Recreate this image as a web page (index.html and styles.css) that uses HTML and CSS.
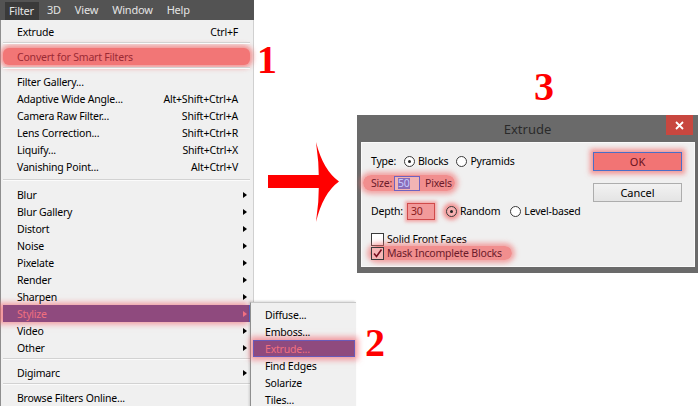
FILE: index.html
```html
<!DOCTYPE html>
<html lang="en">
<head>
    <meta charset="UTF-8">
    <title>Extrude Filter</title>
    <link rel="stylesheet" href="styles.css">
</head>
<body>
    <div class="canvas">
        <!-- Filter menu -->
        <div class="ps-menu">
            <div class="menubar">
                <span class="mb-item active">Filter</span>
                <span class="mb-item">3D</span>
                <span class="mb-item">View</span>
                <span class="mb-item">Window</span>
                <span class="mb-item">Help</span>
            </div>
            <div class="dropdown">
                <div class="item"><span>Extrude</span><span class="key">Ctrl+F</span></div>
                <div class="sep"></div>
                <div class="item glow"><span>Convert for Smart Filters</span></div>
                <div class="sep"></div>
                <div class="item"><span>Filter Gallery...</span></div>
                <div class="item"><span>Adaptive Wide Angle...</span><span class="key">Alt+Shift+Ctrl+A</span></div>
                <div class="item"><span>Camera Raw Filter...</span><span class="key">Shift+Ctrl+A</span></div>
                <div class="item"><span>Lens Correction...</span><span class="key">Shift+Ctrl+R</span></div>
                <div class="item"><span>Liquify...</span><span class="key">Shift+Ctrl+X</span></div>
                <div class="item"><span>Vanishing Point...</span><span class="key">Alt+Ctrl+V</span></div>
                <div class="sep tall"></div>
                <div class="item"><span>Blur</span><span class="arr"></span></div>
                <div class="item"><span>Blur Gallery</span><span class="arr"></span></div>
                <div class="item"><span>Distort</span><span class="arr"></span></div>
                <div class="item"><span>Noise</span><span class="arr"></span></div>
                <div class="item"><span>Pixelate</span><span class="arr"></span></div>
                <div class="item"><span>Render</span><span class="arr"></span></div>
                <div class="item"><span>Sharpen</span><span class="arr"></span></div>
                <div class="item picked"><span>Stylize</span><span class="arr"></span></div>
                <div class="item"><span>Video</span><span class="arr"></span></div>
                <div class="item"><span>Other</span><span class="arr"></span></div>
                <div class="sep"></div>
                <div class="item"><span>Digimarc</span><span class="arr"></span></div>
                <div class="sep"></div>
                <div class="item"><span>Browse Filters Online...</span></div>
            </div>
        </div>

        <!-- Stylize submenu -->
        <div class="submenu">
            <div class="item"><span>Diffuse...</span></div>
            <div class="item"><span>Emboss...</span></div>
            <div class="item picked"><span>Extrude...</span></div>
            <div class="item"><span>Find Edges</span></div>
            <div class="item"><span>Solarize</span></div>
            <div class="item"><span>Tiles...</span></div>
        </div>

        <!-- step numbers -->
        <div class="step s1">1</div>
        <div class="step s2">2</div>
        <div class="step s3">3</div>

        <svg class="arrow" viewBox="260 135 90 95" width="90" height="95">
            <rect x="268" y="175" width="52" height="13" fill="#ff0000"/>
            <path d="M316 142 Q323 170 339 181.5 Q323 193 316 222 Q322 182 316 142 Z" fill="#ff0000"/>
        </svg>

        <!-- Extrude dialog -->
        <div class="dialog">
            <div class="dlg-title">
                <span>Extrude</span>
                <span class="dlg-close">
                    <svg width="9" height="9" viewBox="0 0 9 9"><path d="M1 1 L8 8 M8 1 L1 8" stroke="#fff" stroke-width="1.8"/></svg>
                </span>
            </div>
            <div class="dlg-body">
                <div class="opts">
                    <div class="row r-type">
                        <span class="lbl type-lbl">Type:</span>
                        <span class="radio on"></span><span class="opt">Blocks</span>
                        <span class="radio"></span><span class="opt">Pyramids</span>
                    </div>
                    <div class="row r-size">
                        <span class="hl size-hl">
                            <span class="lbl size-lbl">Size:</span>
                            <span class="field sel-field"><span class="seltext">50</span></span>
                            <span>Pixels</span>
                        </span>
                    </div>
                    <div class="row r-depth">
                        <span class="lbl depth-lbl">Depth:</span>
                        <span class="field red-field">30</span>
                        <span class="radio on red-radio"></span><span class="opt">Random</span>
                        <span class="radio"></span><span class="opt">Level-based</span>
                    </div>
                    <div class="row r-check">
                        <span class="check"></span><span>Solid Front Faces</span>
                    </div>
                    <div class="row r-check">
                        <span class="hl mask-hl">
                            <span class="check on">
                                <svg width="11" height="11" viewBox="0 0 11 11"><path d="M2 5.5 L4.5 8.5 L9.5 1.5" fill="none" stroke="#7a1020" stroke-width="1.6"/></svg>
                            </span>
                            <span>Mask Incomplete Blocks</span>
                        </span>
                    </div>
                </div>
                <div class="btns">
                    <div class="btn ok">OK</div>
                    <div class="btn">Cancel</div>
                </div>
            </div>
        </div>
    </div>
</body>
</html>
```

FILE: styles.css
```css
body {
    margin: 0;
    background: #fff;
    font-family: "Noto Sans", "Open Sans", sans-serif;
    font-size: 10.5px;
    letter-spacing: -0.2px;
    color: #000;
}

.canvas {
    position: relative;
    width: 700px;
    height: 406px;
    overflow: hidden;
}

/* ---------- menu ---------- */

.ps-menu {
    position: absolute;
    left: 0;
    top: 0;
    width: 254px;
}

.menubar {
    display: flex;
    height: 20px;
    background: #535353;
    padding-left: 5px;
    gap: 2px;
}

.mb-item {
    padding: 0 6px;
    line-height: 20px;
    color: #e4e4e4;
    font-size: 11px;
}

.mb-item.active {
    background: #3a3a3a;
    margin-top: 2px;
    line-height: 18px;
    padding: 0 5px 0 4px;
}

.dropdown {
    height: 386px;
    box-sizing: border-box;
    padding-top: 3px;
    background: #f0f0f0;
    border-left: 1px solid #8e8e8e;
    border-right: 1px solid #d0d0d0;
}

.item {
    display: flex;
    justify-content: space-between;
    align-items: center;
    height: 17px;
    margin: 0 3px 0 2px;
    padding: 0 12px 0 14px;
    white-space: nowrap;
}

.arr {
    width: 0;
    height: 0;
    margin-right: -9px;
    border-left: 4px solid #000;
    border-top: 3.5px solid transparent;
    border-bottom: 3.5px solid transparent;
}

.sep {
    height: 8px;
    margin: 0 3px 0 2px;
    position: relative;
}

.sep::before {
    content: "";
    position: absolute;
    left: 0;
    right: 0;
    top: 2px;
    border-top: 1px solid #d2d2d2;
    border-bottom: 1px solid #fbfbfb;
}

.sep.tall {
    height: 11px;
}

.sep.tall::before {
    top: 4px;
}

.item.glow {
    background: #f27676;
    color: #9a2a34;
    border-radius: 6px;
    box-shadow: 0 0 5px 3px rgba(244, 110, 110, 0.7);
}

.item.picked {
    background: #8f4a7e;
    color: #f0707e;
    box-shadow: -4px 0 6px 2px rgba(244, 90, 100, 0.6), inset -1px 0 0 #5a6ad0;
}

.item.picked .arr {
    border-left-color: #f07080;
}

/* ---------- submenu ---------- */

.submenu {
    position: absolute;
    left: 250px;
    top: 302px;
    width: 106px;
    height: 110px;
    box-sizing: border-box;
    padding-top: 3px;
    background: #f0f0f0;
    border-left: 1px solid #8e8e8e;
    border-top: 1px solid #c8c8c8;
    box-shadow: -1px -1px 2px rgba(0, 0, 0, 0.15);
}

.submenu .item {
    margin: 0 1px 0 2px;
    padding-left: 12px;
}

.submenu .item.picked {
    box-shadow: 0 0 6px 3px rgba(244, 90, 100, 0.6), inset 0 0 0 1px #6a5ab8;
}

/* ---------- step numbers and arrow ---------- */

.step {
    position: absolute;
    font-family: "Liberation Serif", serif;
    font-weight: bold;
    font-size: 40px;
    line-height: 40px;
    color: #ff0000;
    letter-spacing: 0;
}

.s1 { left: 257px; top: 40px; }
.s2 { left: 365px; top: 323px; }
.s3 { left: 534px; top: 67px; }

.arrow {
    position: absolute;
    left: 260px;
    top: 135px;
}

/* ---------- dialog ---------- */

.dialog {
    position: absolute;
    left: 357px;
    top: 115px;
    width: 341px;
    height: 158px;
    background: #6a6a6a;
}

.dlg-title {
    position: relative;
    height: 27px;
    display: flex;
    align-items: center;
    justify-content: center;
    color: #2a2a2a;
    font-size: 13px;
    letter-spacing: 0;
}

.dlg-close {
    position: absolute;
    right: 5px;
    top: 0;
    width: 27px;
    height: 20px;
    background: #c8473f;
    display: flex;
    align-items: center;
    justify-content: center;
}

.dlg-body {
    display: flex;
    height: 125px;
    margin: 0 3px 0 4px;
    box-sizing: border-box;
    background: #f0f0f0;
    border: 1px solid #fafafa;
}

.opts {
    width: 231px;
    padding: 10px 0 0 9px;
    box-sizing: border-box;
}

.row {
    display: flex;
    align-items: center;
    white-space: nowrap;
}

.r-type { height: 16px; }
.r-size { height: 16px; margin-top: 6px; }
.r-depth { height: 18px; margin-top: 11px; }
.r-check { height: 14px; }
.r-depth + .r-check { margin-top: 12px; }

.type-lbl { width: 33px; }
.depth-lbl { width: 36px; }
.size-lbl { width: 23px; }

.radio {
    width: 11px;
    height: 11px;
    box-sizing: border-box;
    border: 1px solid #3a3a3a;
    border-radius: 50%;
    background: #fff;
    margin-right: 3px;
    display: flex;
    align-items: center;
    justify-content: center;
}

.radio.on::after {
    content: "";
    width: 3px;
    height: 3px;
    border-radius: 50%;
    background: #222;
}

.r-type .opt { margin-right: 8px; }
.r-depth .opt { margin-right: 10px; }

.red-radio {
    margin-left: 11px;
    background: #f7b0b0;
    box-shadow: 0 0 4px 3px rgba(244, 100, 100, 0.7);
}

.field {
    box-sizing: border-box;
    border: 1px solid #9a9a9a;
    display: flex;
    align-items: center;
    padding-left: 3px;
    background: #fff;
}

.sel-field {
    width: 26px;
    height: 15px;
    margin-right: 5px;
    border-color: #6e62c0;
    background: #f2b4b4;
}

.seltext {
    background: #8a6cb8;
    color: #c6cbff;
    line-height: 11px;
}

.red-field {
    width: 28px;
    height: 17px;
    border-color: #d04a4a;
    background: #f29a9a;
    color: #8a1a20;
    box-shadow: 0 0 3px 2px rgba(244, 100, 100, 0.5);
}

.hl {
    display: flex;
    align-items: center;
    border-radius: 8px;
    color: #6a1a2a;
    background: rgba(242, 110, 110, 0.75);
    box-shadow: 0 0 5px 3px rgba(242, 110, 110, 0.6);
}

.size-hl {
    margin-left: -8px;
    padding: 0 3px 0 8px;
    height: 16px;
}

.mask-hl {
    margin-left: -1px;
    padding: 0 10px 0 1px;
    height: 14px;
}

.check {
    width: 13px;
    height: 13px;
    box-sizing: border-box;
    border: 1px solid #3a3a3a;
    background: #fff;
    margin-right: 3px;
    display: flex;
    align-items: center;
    justify-content: center;
}

.check.on {
    background: #f6b6b6;
}

.btns {
    display: flex;
    flex-direction: column;
    gap: 12px;
    padding-top: 9px;
}

.btn {
    width: 89px;
    height: 19px;
    box-sizing: border-box;
    border: 1px solid #adadad;
    background: linear-gradient(#f2f2f2, #e4e4e4);
    display: flex;
    align-items: center;
    justify-content: center;
    font-size: 11px;
    letter-spacing: 0;
}

.btn.ok {
    border-color: #4a6ec8;
    background: #f27474;
    color: #6a1020;
    box-shadow: 0 0 5px 3px rgba(244, 110, 110, 0.7);
}
```
